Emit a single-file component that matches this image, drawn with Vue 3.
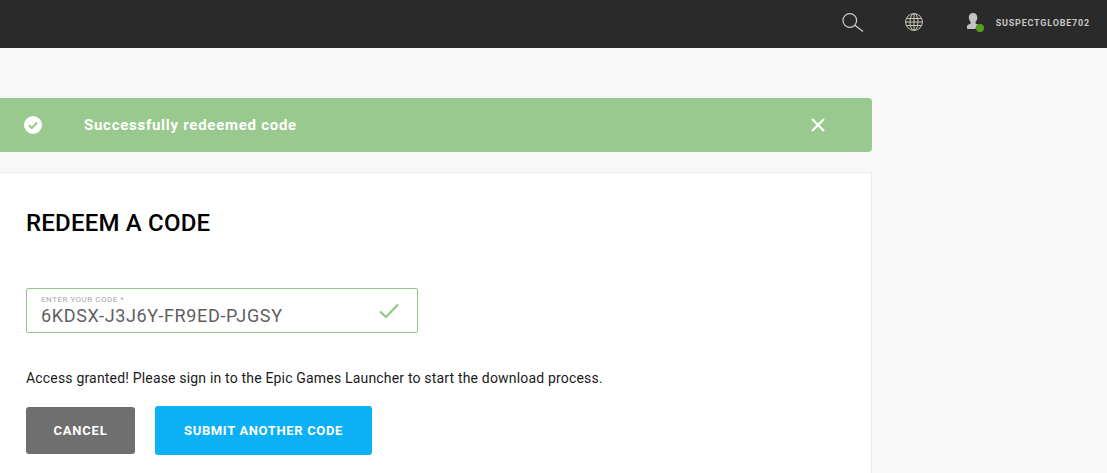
<script setup>
const code = '6KDSX-J3J6Y-FR9ED-PJGSY'
</script>

<template>
  <div class="page">
    <header class="topbar">
      <svg class="search" width="22" height="19" viewBox="0 0 22 19" fill="none" stroke="#c9cdd0" stroke-width="1.2">
        <circle cx="7.800" cy="7.500" r="6.800" />
        <path d="M12.800 12.300l8.200 6.200" />
      </svg>
      <svg class="globe" width="18" height="18" viewBox="0 0 18 18" fill="none" stroke="#c8c4b4" stroke-width="1">
        <circle cx="9" cy="9" r="8.400" />
        <ellipse cx="9" cy="9" rx="4" ry="8.400" />
        <path d="M9 .6v16.800M1.400 5.500h15.200M1.400 12.500h15.200M.6 9h16.800" />
      </svg>
      <div class="user">
        <svg class="avatar" width="18" height="20" viewBox="0 0 18 20">
          <path fill="#c4c4c4" d="M6 0c2.800 0 4.300 2 4.300 4.600 0 1.900-.7 3.400-1.700 4.400v1.500l2.400 1.300c-1.500.8-2.400 2.400-2.400 4.200H1c-.6 0-1-.4-1-1v-1.500c0-1 .6-1.700 1.800-2.100l1.800-.9V9C2.600 8 1.800 6.500 1.800 4.600 1.800 2 3.200 0 6 0z" />
          <circle cx="13" cy="15" r="4" fill="#56a01e" />
        </svg>
        <span class="username">SUSPECTGLOBE702</span>
      </div>
    </header>

    <main class="content">
      <div class="banner">
        <svg class="banner-check" width="18" height="18" viewBox="0 0 18 18">
          <circle cx="9" cy="9" r="9" fill="#fff" />
          <path d="M5 9.300l2.800 2.800L13 6.500" fill="none" stroke="#99c98f" stroke-width="2" />
        </svg>
        <span class="banner-text">Successfully redeemed code</span>
        <svg class="banner-close" width="16" height="16" viewBox="0 0 16 16" fill="none" stroke="#fff" stroke-width="2.200">
          <path d="M2 2l12 12M14 2L2 14" />
        </svg>
      </div>

      <section class="card">
        <h1 class="title">REDEEM A CODE</h1>
        <div class="field">
          <div class="field-body">
            <label class="field-label">ENTER YOUR CODE *</label>
            <div class="field-value">{{ code }}</div>
          </div>
          <svg class="field-check" width="20" height="16" viewBox="0 0 20 16" fill="none" stroke="#8fc887" stroke-width="2.200">
            <path d="M1 8.500l6 5.500L19 1.500" />
          </svg>
        </div>
        <p class="message">Access granted! Please sign in to the Epic Games Launcher to start the download process.</p>
        <div class="actions">
          <button class="btn cancel">CANCEL</button>
          <button class="btn submit">SUBMIT ANOTHER CODE</button>
        </div>
      </section>
    </main>
  </div>
</template>

<style>
html, body { margin: 0; padding: 0; overflow: hidden; background: #f8f8f8; }
</style>

<style scoped>
.page {
  width: 1107px;
  height: 473px;
  overflow: hidden;
  background: #f8f8f8;
  font-family: Roboto, "Liberation Sans", sans-serif;
}
.topbar {
  height: 48px;
  box-sizing: border-box;
  background: #2a2a2a;
  display: flex;
  align-items: center;
  padding: 0 17px 4px 0;
  justify-content: flex-end;
}
.search { margin-right: 41px; }
.globe { margin-right: 44px; }
.user { display: flex; align-items: center; gap: 11px; margin-top: 2px; }
.username {
  color: #c6c6c6;
  font-size: 9px;
  font-weight: 700;
  letter-spacing: 0.8px;
}
.content {
  width: 872px;
  padding-top: 50px;
}
.banner {
  height: 54px;
  background: #99c98f;
  border-radius: 0 4px 4px 0;
  display: flex;
  align-items: center;
  padding-left: 24px;
  padding-right: 46px;
  color: #fff;
}
.banner-text {
  margin-left: 42px;
  font-size: 15px;
  font-weight: 700;
  letter-spacing: 0.73px;
  flex: 1;
}
.card {
  margin-top: 20px;
  height: 320px;
  box-sizing: border-box;
  background: #fff;
  border: 1px solid #ececec;
  border-left: 0;
  padding: 0 0 0 26px;
  width: 872px;
}
.title {
  margin: 36px 0 0;
  font-size: 24px;
  line-height: 28px;
  font-weight: 500;
  color: #000;
  letter-spacing: 0.2px;
}
.field {
  margin-top: 51px;
  width: 392px;
  height: 45px;
  box-sizing: border-box;
  border: 1px solid #8fc887;
  border-radius: 2px;
  display: flex;
  align-items: center;
  padding: 0 18px 0 14px;
}
.field-body { flex: 1; }
.field-label {
  display: block;
  font-size: 8px;
  line-height: 10px;
  letter-spacing: 0.5px;
  color: #a5a5a5;
}
.field-value {
  font-size: 18px;
  line-height: 22px;
  color: #5f5f5f;
  letter-spacing: 0.65px;
}
.message {
  margin: 37px 0 0;
  font-size: 14px;
  line-height: 16px;
  color: #1a1a1a;
  letter-spacing: 0.18px;
}
.actions {
  margin-top: 20px;
  display: flex;
  align-items: center;
  gap: 20px;
}
.btn {
  border: 0;
  border-radius: 3px;
  color: #fff;
  font-family: inherit;
  font-size: 13px;
  font-weight: 700;
  padding: 0;
}
.cancel { width: 109px; height: 47px; background: #6f6f6f; letter-spacing: 0.8px; }
.submit { width: 217px; height: 49px; background: #0bb0f5; letter-spacing: 0.65px; }
</style>
